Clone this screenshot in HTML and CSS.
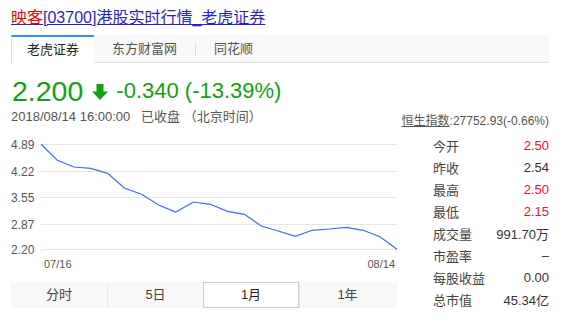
FILE: index.html
```html
<!DOCTYPE html>
<html lang="zh-CN">
<head>
    <meta charset="UTF-8">
    <title>映客[03700]港股实时行情_老虎证券</title>
    <link rel="stylesheet" href="styles.css">
</head>
<body>

<section id="main">
    <h3 class="title"><a href="#"><em>映客</em>[03700]港股实时行情_老虎证券</a></h3>

    <ul class="src-tabs">
        <li class="src-tab active">老虎证券</li>
        <li class="src-tab">东方财富网</li>
        <li class="src-tab last">同花顺</li>
    </ul>

    <div class="price-row">
        <span class="price">2.200</span>
        <svg class="arrow" width="16" height="16" viewBox="0 0 16 16"><path d="M4.5 0h7v7.5h4.5l-8 8.5-8-8.5h4.5z" fill="#13a013"/></svg>
        <span class="change">-0.340 (-13.39%)</span>
    </div>

    <div class="info-row">
        <span class="time">2018/08/14 16:00:00&nbsp;&nbsp; 已收盘 （北京时间）</span>
        <span class="hsi"><a href="#">恒生指数</a>:27752.93(-0.66%)</span>
    </div>

    <section class="body">
        <div class="chart-col">
            <svg class="chart" width="386" height="140" viewBox="0 0 386 140">
                <g stroke="#e6e6e6" stroke-width="1">
                    <line x1="30" y1="8.5" x2="386" y2="8.5"/>
                    <line x1="30" y1="35.5" x2="386" y2="35.5"/>
                    <line x1="30" y1="61.5" x2="386" y2="61.5"/>
                    <line x1="30" y1="88.5" x2="386" y2="88.5"/>
                    <line x1="30" y1="113.5" x2="386" y2="113.5"/>
                    <line x1="30.5" y1="113" x2="30.5" y2="117"/>
                    <line x1="385.5" y1="113" x2="385.5" y2="117"/>
                </g>
                <g class="axis" fill="#555" font-size="12">
                    <text x="0" y="12.5">4.89</text>
                    <text x="0" y="39.5">4.22</text>
                    <text x="0" y="65.5">3.55</text>
                    <text x="0" y="92.5">2.87</text>
                    <text x="0" y="117.5">2.20</text>
                    <text x="33" y="132" font-size="11">07/16</text>
                    <text x="384" y="132" font-size="11" text-anchor="end">08/14</text>
                </g>
                <polyline fill="none" stroke="#3d6cf5" stroke-width="1.2"
                    points="30,8.3 46.3,24.3 63,31 79.7,32.3 96.6,37.3 113.6,52.3 130.6,58.3 147.6,69 164.6,76 182.5,66 199.5,68.3 216.5,75.3 233.4,78.3 250.4,90 267.3,95 284.3,100.3 301.2,94.3 318.2,93 335.1,91.3 352.1,94.3 369,100.7 386,113.3"/>
            </svg>

            <ul class="ranges">
                <li class="range">分时</li>
                <li class="range">5日</li>
                <li class="range active">1月</li>
                <li class="range">1年</li>
            </ul>
        </div>

        <table class="stats">
            <tr><td>今开</td><td class="up">2.50</td></tr>
            <tr><td>昨收</td><td>2.54</td></tr>
            <tr><td>最高</td><td class="up">2.50</td></tr>
            <tr><td>最低</td><td class="up">2.15</td></tr>
            <tr><td>成交量</td><td>991.70万</td></tr>
            <tr><td>市盈率</td><td>–</td></tr>
            <tr><td>每股收益</td><td>0.00</td></tr>
            <tr><td>总市值</td><td>45.34亿</td></tr>
        </table>
    </section>
</section>

</body>
</html>
```

FILE: styles.css
```css
body {
    margin: 0;
    font-family: "Liberation Sans", "Noto Sans CJK SC", sans-serif;
    color: #333;
    background: #fff;
}
#main {
    width: 538px;
    padding: 7px 0 0 11px;
}
.title {
    margin: 0;
    font-size: 16px;
    font-weight: normal;
    line-height: 21px;
}
.title a {
    color: #2a1fc9;
    text-decoration: underline;
}
.title em {
    font-style: normal;
    color: #e00;
}
.src-tabs {
    list-style: none;
    margin: 7px 0 0;
    padding: 0;
    display: flex;
    align-items: center;
    height: 27px;
    background: #f8f8f8;
    border-bottom: 1px solid #ddd;
}
.src-tab {
    font-size: 13px;
    color: #555;
    padding: 0 18px;
    line-height: 14px;
}
.src-tab.active {
    align-self: stretch;
    padding: 0 15px;
    line-height: 25px;
    margin-bottom: -1px;
    background: #fff;
    color: #222;
    border-top: 2px solid #2b8ef0;
    border-left: 1px solid #ddd;
}
.src-tab.last {
    border-left: 1px solid #ddd;
}
.price-row {
    display: flex;
    align-items: center;
    margin-top: 11px;
    color: #13a013;
    height: 34px;
}
.price {
    font-size: 28.5px;
    line-height: 34px;
    padding-left: 1px;
}
.arrow {
    margin: 1px 8px 0 9px;
}
.change {
    font-size: 22px;
    line-height: 34px;
}
.info-row {
    display: flex;
    justify-content: space-between;
    align-items: flex-end;
    height: 22px;
    font-size: 13px;
    color: #555;
}
.time {
    line-height: 17px;
    margin-bottom: 5px;
}
.hsi {
    font-size: 12px;
    line-height: 16px;
    margin-bottom: 1px;
}
.hsi a {
    color: #555;
    text-decoration: underline;
}
.body {
    display: flex;
    margin-top: 6px;
}
.chart-col {
    width: 386px;
}
.chart {
    display: block;
}
.axis text {
    font-family: "Liberation Sans", sans-serif;
}
.ranges {
    list-style: none;
    margin: 6px 0 0;
    padding: 0;
    display: flex;
    height: 26px;
    background: #f8f8f8;
}
.range {
    width: 96px;
    text-align: center;
    font-size: 13px;
    line-height: 26px;
    color: #444;
    border-left: 1px solid #e8e8e8;
    box-sizing: border-box;
}
.range:first-child {
    border-left: 0;
}
.range.active {
    background: #fff;
    border: 1px solid #ccc;
    line-height: 24px;
    color: #222;
}
.stats {
    margin-left: 36px;
    width: 116px;
    border-collapse: collapse;
    font-size: 13px;
    margin-top: -2px;
}
.stats td {
    height: 22px;
    padding: 0;
    color: #444;
}
.stats td + td {
    text-align: right;
    color: #333;
}
.stats td.up {
    color: #f0102a;
}
```
